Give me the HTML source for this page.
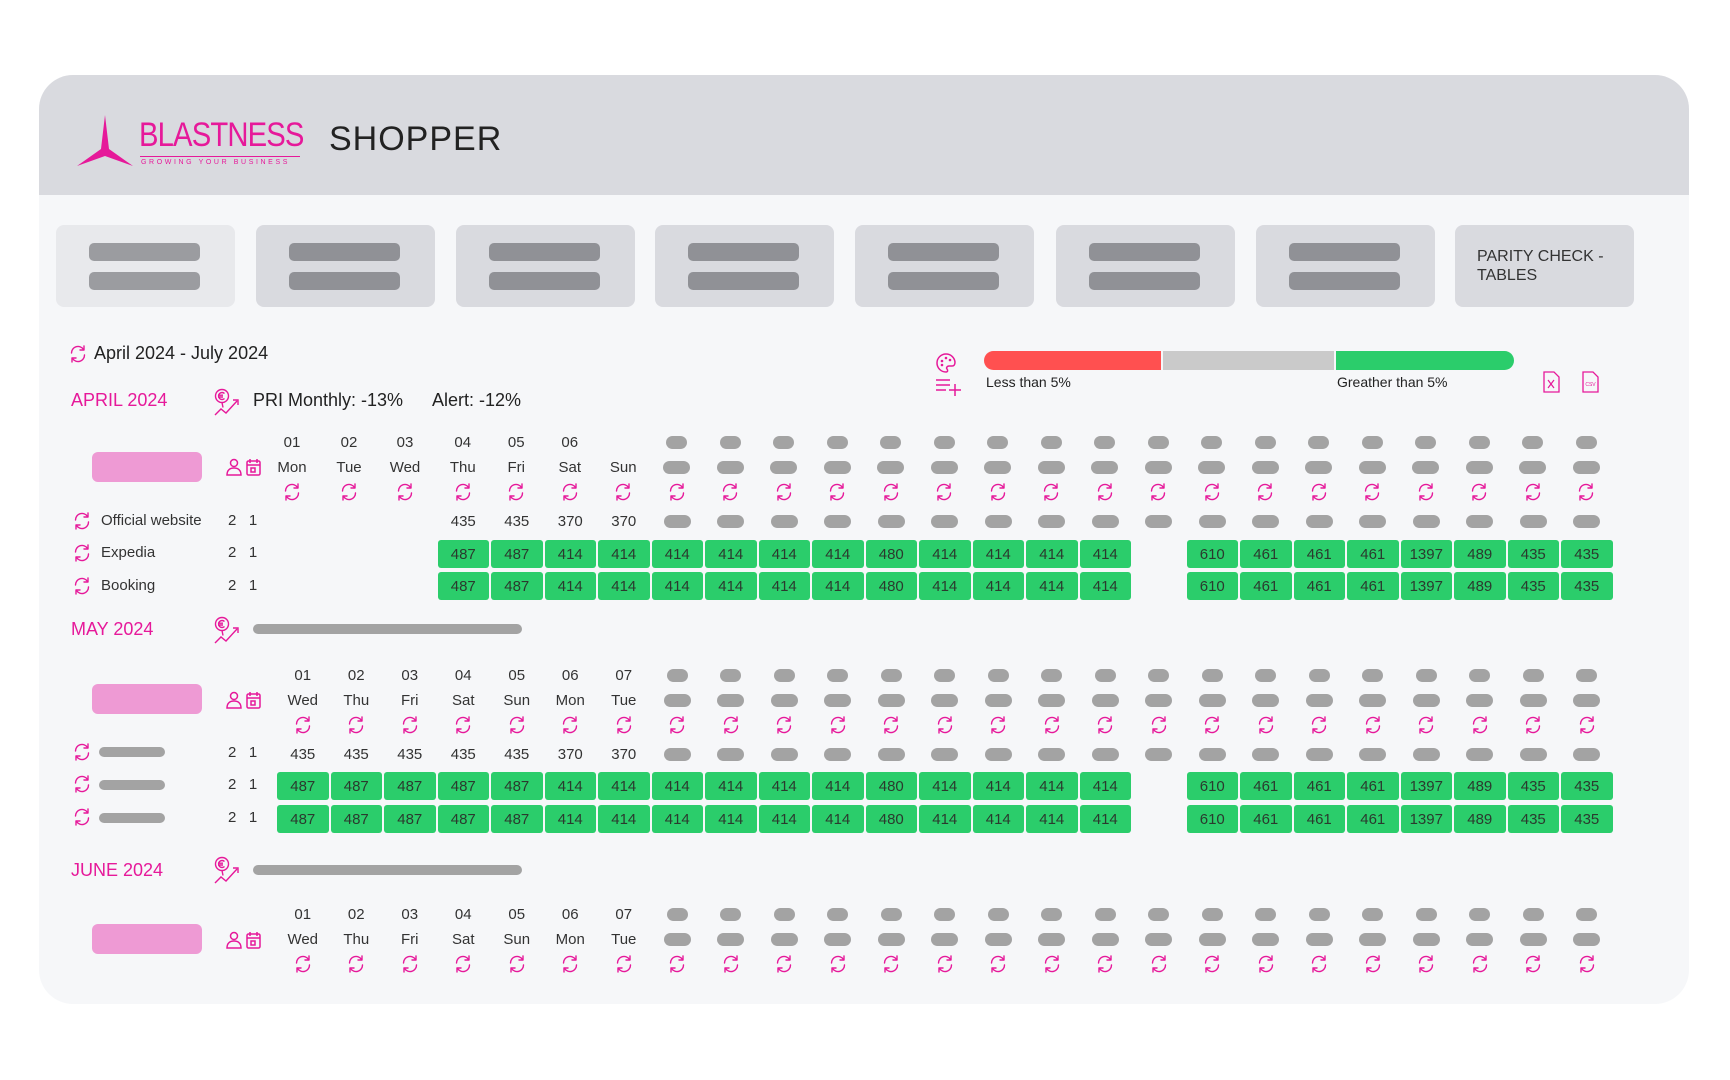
<!DOCTYPE html>
<html><head><meta charset="utf-8"><style>
*{margin:0;padding:0;box-sizing:border-box}
body{width:1730px;height:1080px;background:#fff;font-family:"Liberation Sans",sans-serif;color:#2a2a2a;position:relative;overflow:hidden}
.card{position:absolute;left:39px;top:75px;width:1650px;height:929px;background:#f6f7f9;border-radius:34px;overflow:hidden}
.hdr{position:absolute;left:0;top:0;width:100%;height:120px;background:#d9dadf}
.a{position:absolute}
.tab{position:absolute;top:150px;width:179px;height:82px;background:#d9dadf;border-radius:8px}
.tab i{position:absolute;left:33px;width:111px;height:18px;background:#909196;border-radius:5px}
.r{position:absolute;left:276px;display:flex}
.c{width:53.5px;height:28px;display:flex;align-items:center;justify-content:center;font-size:15px;color:#333;flex:none}
.g{width:51.5px;height:28px;background:#2bcd6b;border-radius:3px;display:flex;align-items:center;justify-content:center;font-size:15px;color:#2b3a2e;font-weight:normal}
.p1{width:21px;height:13px;background:#a3a3a3;border-radius:7px}
.p2{width:27px;height:13px;background:#a3a3a3;border-radius:7px}
.s{width:20px;height:20px}
.pk{color:#e6199a}
.lbl{position:absolute;font-size:15px;color:#333}
.gb{position:absolute;height:10px;background:#a3a3a3;border-radius:5px}
.pill{position:absolute;left:92px;width:110px;height:30px;background:#ee9ad4;border-radius:6px}
</style></head><body>
<svg width="0" height="0" style="position:absolute"><defs>
<symbol id="sy" viewBox="0 0 20 20"><g fill="none" stroke="#e6199a" stroke-width="1.4" stroke-linecap="round" stroke-linejoin="round"><path d="M3.5 9A6.5 6.5 0 0 1 15.5 5.5"/><path d="M16 2v4h-4"/><path d="M16.5 11A6.5 6.5 0 0 1 4.5 14.5"/><path d="M4 18v-4h4"/></g></symbol>
<symbol id="pc" viewBox="0 0 40 20"><g fill="none" stroke="#e6199a" stroke-width="1.5"><circle cx="10" cy="6" r="3.5"/><path d="M3 18c0-5 3-7 7-7s7 2 7 7z"/><rect x="23" y="4" width="13" height="14" rx="1.5"/><path d="M23 8h13M26 2v4M33 2v4"/><rect x="27" y="11" width="4" height="4"/></g></symbol>
<symbol id="eu" viewBox="0 0 30 30"><g fill="none" stroke="#e6199a" stroke-width="1.4"><circle cx="9" cy="8" r="6.5"/><path d="M11.5 5.5a3.5 3.5 0 1 0 0 5M5 7.2h5M5 9h5"/><path d="M2 27l6-6 5 4 11-12"/><path d="M20 12h5v5"/><path d="M9 14.5l1 5"/></g></symbol>
</defs></svg>
<div class="card">
<div class="hdr"></div>
<svg class="a" style="left:36px;top:40px" width="60" height="52" viewBox="0 0 60 52"><path d="M30 0L34 34L58 51L30 41L2 51L26 34Z" fill="#e6199a"/></svg>
<div class="a" style="left:100px;top:41px;font-size:34px;color:#e6199a;letter-spacing:-1px;transform:scaleX(.86);transform-origin:left">BLASTNESS</div>
<div class="a" style="left:101px;top:81px;width:160px;height:1px;background:#e6199a"></div>
<div class="a" style="left:102px;top:84px;font-size:7px;letter-spacing:2.6px;color:#e6199a">GROWING YOUR BUSINESS</div>
<div class="a" style="left:290px;top:45px;font-size:34px;color:#222;letter-spacing:1px">SHOPPER</div>

<div class="tab" style="left:17px;background:#e8e9ec"><i style="top:18px;background:#9b9ca0"></i><i style="top:47px;background:#9b9ca0"></i></div>
<div class="tab" style="left:217px"><i style="top:18px"></i><i style="top:47px"></i></div>
<div class="tab" style="left:417px"><i style="top:18px"></i><i style="top:47px"></i></div>
<div class="tab" style="left:616px"><i style="top:18px"></i><i style="top:47px"></i></div>
<div class="tab" style="left:816px"><i style="top:18px"></i><i style="top:47px"></i></div>
<div class="tab" style="left:1017px"><i style="top:18px"></i><i style="top:47px"></i></div>
<div class="tab" style="left:1217px"><i style="top:18px"></i><i style="top:47px"></i></div>
<div class="tab" style="left:1416px;padding:22px 0 0 22px;font-size:16px;line-height:19px;color:#333">PARITY CHECK -<br>TABLES</div>
</div>

<svg class="a" style="left:68px;top:344px" width="20" height="20"><use href="#sy"/></svg>
<div class="a" style="left:94px;top:343px;font-size:18px;color:#222">April 2024 - July 2024</div>

<div class="a pk" style="left:71px;top:390px;font-size:18px">APRIL 2024</div>
<svg class="a" style="left:213px;top:388px" width="30" height="30"><use href="#eu"/></svg>
<div class="a" style="left:253px;top:390px;font-size:18px;color:#222">PRI Monthly: -13%</div>
<div class="a" style="left:432px;top:390px;font-size:18px;color:#222">Alert: -12%</div>

<svg class="a" style="left:935px;top:352px" width="22" height="22" viewBox="0 0 22 22"><path d="M11 2a9 9 0 0 0 0 18c2 0 2-2 1-3s0-3 2-3h3c2 0 3-1 3-4A9 9 0 0 0 11 2z" fill="none" stroke="#e6199a" stroke-width="1.5"/><circle cx="7" cy="9" r="1.3" fill="#e6199a"/><circle cx="11" cy="6" r="1.3" fill="#e6199a"/><circle cx="15" cy="8" r="1.3" fill="#e6199a"/><circle cx="7" cy="13" r="1.3" fill="#e6199a"/></svg>
<svg class="a" style="left:935px;top:377px" width="28" height="20" viewBox="0 0 28 20"><path d="M1 3h14M1 8h14M1 13h10M20 7v12M14 13h12" stroke="#e6199a" stroke-width="1.5" fill="none"/></svg>
<div class="a" style="left:984px;top:351px;width:177px;height:19px;background:#ff5050;border-radius:10px 0 0 10px"></div>
<div class="a" style="left:1163px;top:351px;width:171px;height:19px;background:#cacaca"></div>
<div class="a" style="left:1336px;top:351px;width:178px;height:19px;background:#2bcd6b;border-radius:0 10px 10px 0"></div>
<div class="a" style="left:986px;top:374px;font-size:14px;color:#222">Less than 5%</div>
<div class="a" style="left:1337px;top:374px;font-size:14px;color:#222">Greather than 5%</div>
<svg class="a" style="left:1543px;top:371px" width="17" height="22" viewBox="0 0 17 22"><path d="M1 1h10l5 5v15H1z" fill="none" stroke="#e6199a" stroke-width="1.3"/><path d="M5 9l6 8M11 9l-6 8" stroke="#e6199a" stroke-width="1.2"/></svg>
<svg class="a" style="left:1582px;top:371px" width="17" height="22" viewBox="0 0 17 22"><path d="M1 1h10l5 5v15H1z" fill="none" stroke="#e6199a" stroke-width="1.3"/><text x="8.5" y="15" font-size="5" text-anchor="middle" fill="#e6199a" font-family="Liberation Sans">CSV</text></svg>

<!-- APRIL -->
<div class="pill" style="top:452px"></div>
<svg class="a" style="left:224px;top:457px" width="40" height="20"><use href="#pc"/></svg>
<div class="r" style="top:428px;left:263px"><div class="c" style="width:58px">01</div><div class="c" style="width:56px">02</div><div class="c" style="width:56px">03</div></div>
<div class="r" style="top:453px;left:263px"><div class="c" style="width:58px">Mon</div><div class="c" style="width:56px">Tue</div><div class="c" style="width:56px">Wed</div></div>
<div class="r" style="top:478px;left:263px"><div class="c" style="width:58px"><svg class="s"><use href="#sy"/></svg></div><div class="c" style="width:56px"><svg class="s"><use href="#sy"/></svg></div><div class="c" style="width:56px"><svg class="s"><use href="#sy"/></svg></div></div>
<div class="r" style="top:428px;left:436px"><div class="c">04</div><div class="c">05</div><div class="c">06</div><div class="c"></div><div class="c"><i class="p1"></i></div><div class="c"><i class="p1"></i></div><div class="c"><i class="p1"></i></div><div class="c"><i class="p1"></i></div><div class="c"><i class="p1"></i></div><div class="c"><i class="p1"></i></div><div class="c"><i class="p1"></i></div><div class="c"><i class="p1"></i></div><div class="c"><i class="p1"></i></div><div class="c"><i class="p1"></i></div><div class="c"><i class="p1"></i></div><div class="c"><i class="p1"></i></div><div class="c"><i class="p1"></i></div><div class="c"><i class="p1"></i></div><div class="c"><i class="p1"></i></div><div class="c"><i class="p1"></i></div><div class="c"><i class="p1"></i></div><div class="c"><i class="p1"></i></div></div>
<div class="r" style="top:453px;left:436px"><div class="c">Thu</div><div class="c">Fri</div><div class="c">Sat</div><div class="c">Sun</div><div class="c"><i class="p2"></i></div><div class="c"><i class="p2"></i></div><div class="c"><i class="p2"></i></div><div class="c"><i class="p2"></i></div><div class="c"><i class="p2"></i></div><div class="c"><i class="p2"></i></div><div class="c"><i class="p2"></i></div><div class="c"><i class="p2"></i></div><div class="c"><i class="p2"></i></div><div class="c"><i class="p2"></i></div><div class="c"><i class="p2"></i></div><div class="c"><i class="p2"></i></div><div class="c"><i class="p2"></i></div><div class="c"><i class="p2"></i></div><div class="c"><i class="p2"></i></div><div class="c"><i class="p2"></i></div><div class="c"><i class="p2"></i></div><div class="c"><i class="p2"></i></div></div>
<div class="r" style="top:478px;left:436px"><div class="c"><svg class="s"><use href="#sy"/></svg></div><div class="c"><svg class="s"><use href="#sy"/></svg></div><div class="c"><svg class="s"><use href="#sy"/></svg></div><div class="c"><svg class="s"><use href="#sy"/></svg></div><div class="c"><svg class="s"><use href="#sy"/></svg></div><div class="c"><svg class="s"><use href="#sy"/></svg></div><div class="c"><svg class="s"><use href="#sy"/></svg></div><div class="c"><svg class="s"><use href="#sy"/></svg></div><div class="c"><svg class="s"><use href="#sy"/></svg></div><div class="c"><svg class="s"><use href="#sy"/></svg></div><div class="c"><svg class="s"><use href="#sy"/></svg></div><div class="c"><svg class="s"><use href="#sy"/></svg></div><div class="c"><svg class="s"><use href="#sy"/></svg></div><div class="c"><svg class="s"><use href="#sy"/></svg></div><div class="c"><svg class="s"><use href="#sy"/></svg></div><div class="c"><svg class="s"><use href="#sy"/></svg></div><div class="c"><svg class="s"><use href="#sy"/></svg></div><div class="c"><svg class="s"><use href="#sy"/></svg></div><div class="c"><svg class="s"><use href="#sy"/></svg></div><div class="c"><svg class="s"><use href="#sy"/></svg></div><div class="c"><svg class="s"><use href="#sy"/></svg></div><div class="c"><svg class="s"><use href="#sy"/></svg></div></div>

<svg class="a" style="left:72px;top:511px" width="20" height="20"><use href="#sy"/></svg><div class="lbl" style="left:101px;top:512px">Official website</div><div class="lbl" style="left:228px;top:512px">2&nbsp;&nbsp;&nbsp;1</div>
<svg class="a" style="left:72px;top:543px" width="20" height="20"><use href="#sy"/></svg><div class="lbl" style="left:101px;top:544px">Expedia</div><div class="lbl" style="left:228px;top:544px">2&nbsp;&nbsp;&nbsp;1</div>
<svg class="a" style="left:72px;top:576px" width="20" height="20"><use href="#sy"/></svg><div class="lbl" style="left:101px;top:577px">Booking</div><div class="lbl" style="left:228px;top:577px">2&nbsp;&nbsp;&nbsp;1</div>

<div class="r" style="top:507px"><div class="c"></div><div class="c"></div><div class="c"></div><div class="c">435</div><div class="c">435</div><div class="c">370</div><div class="c">370</div><div class="c"><i class="p2"></i></div><div class="c"><i class="p2"></i></div><div class="c"><i class="p2"></i></div><div class="c"><i class="p2"></i></div><div class="c"><i class="p2"></i></div><div class="c"><i class="p2"></i></div><div class="c"><i class="p2"></i></div><div class="c"><i class="p2"></i></div><div class="c"><i class="p2"></i></div><div class="c"><i class="p2"></i></div><div class="c"><i class="p2"></i></div><div class="c"><i class="p2"></i></div><div class="c"><i class="p2"></i></div><div class="c"><i class="p2"></i></div><div class="c"><i class="p2"></i></div><div class="c"><i class="p2"></i></div><div class="c"><i class="p2"></i></div><div class="c"><i class="p2"></i></div></div>
<div class="r" style="top:540px"><div class="c"></div><div class="c"></div><div class="c"></div><div class="c"><span class="g">487</span></div><div class="c"><span class="g">487</span></div><div class="c"><span class="g">414</span></div><div class="c"><span class="g">414</span></div><div class="c"><span class="g">414</span></div><div class="c"><span class="g">414</span></div><div class="c"><span class="g">414</span></div><div class="c"><span class="g">414</span></div><div class="c"><span class="g">480</span></div><div class="c"><span class="g">414</span></div><div class="c"><span class="g">414</span></div><div class="c"><span class="g">414</span></div><div class="c"><span class="g">414</span></div><div class="c"></div><div class="c"><span class="g">610</span></div><div class="c"><span class="g">461</span></div><div class="c"><span class="g">461</span></div><div class="c"><span class="g">461</span></div><div class="c"><span class="g">1397</span></div><div class="c"><span class="g">489</span></div><div class="c"><span class="g">435</span></div><div class="c"><span class="g">435</span></div></div>
<div class="r" style="top:572px"><div class="c"></div><div class="c"></div><div class="c"></div><div class="c"><span class="g">487</span></div><div class="c"><span class="g">487</span></div><div class="c"><span class="g">414</span></div><div class="c"><span class="g">414</span></div><div class="c"><span class="g">414</span></div><div class="c"><span class="g">414</span></div><div class="c"><span class="g">414</span></div><div class="c"><span class="g">414</span></div><div class="c"><span class="g">480</span></div><div class="c"><span class="g">414</span></div><div class="c"><span class="g">414</span></div><div class="c"><span class="g">414</span></div><div class="c"><span class="g">414</span></div><div class="c"></div><div class="c"><span class="g">610</span></div><div class="c"><span class="g">461</span></div><div class="c"><span class="g">461</span></div><div class="c"><span class="g">461</span></div><div class="c"><span class="g">1397</span></div><div class="c"><span class="g">489</span></div><div class="c"><span class="g">435</span></div><div class="c"><span class="g">435</span></div></div>

<!-- MAY -->
<div class="a pk" style="left:71px;top:619px;font-size:18px">MAY 2024</div>
<svg class="a" style="left:213px;top:616px" width="30" height="30"><use href="#eu"/></svg>
<div class="gb" style="left:253px;top:624px;width:269px"></div>
<div class="pill" style="top:684px"></div>
<svg class="a" style="left:224px;top:690px" width="40" height="20"><use href="#pc"/></svg>
<div class="r" style="top:661px"><div class="c">01</div><div class="c">02</div><div class="c">03</div><div class="c">04</div><div class="c">05</div><div class="c">06</div><div class="c">07</div><div class="c"><i class="p1"></i></div><div class="c"><i class="p1"></i></div><div class="c"><i class="p1"></i></div><div class="c"><i class="p1"></i></div><div class="c"><i class="p1"></i></div><div class="c"><i class="p1"></i></div><div class="c"><i class="p1"></i></div><div class="c"><i class="p1"></i></div><div class="c"><i class="p1"></i></div><div class="c"><i class="p1"></i></div><div class="c"><i class="p1"></i></div><div class="c"><i class="p1"></i></div><div class="c"><i class="p1"></i></div><div class="c"><i class="p1"></i></div><div class="c"><i class="p1"></i></div><div class="c"><i class="p1"></i></div><div class="c"><i class="p1"></i></div><div class="c"><i class="p1"></i></div></div>
<div class="r" style="top:686px"><div class="c">Wed</div><div class="c">Thu</div><div class="c">Fri</div><div class="c">Sat</div><div class="c">Sun</div><div class="c">Mon</div><div class="c">Tue</div><div class="c"><i class="p2"></i></div><div class="c"><i class="p2"></i></div><div class="c"><i class="p2"></i></div><div class="c"><i class="p2"></i></div><div class="c"><i class="p2"></i></div><div class="c"><i class="p2"></i></div><div class="c"><i class="p2"></i></div><div class="c"><i class="p2"></i></div><div class="c"><i class="p2"></i></div><div class="c"><i class="p2"></i></div><div class="c"><i class="p2"></i></div><div class="c"><i class="p2"></i></div><div class="c"><i class="p2"></i></div><div class="c"><i class="p2"></i></div><div class="c"><i class="p2"></i></div><div class="c"><i class="p2"></i></div><div class="c"><i class="p2"></i></div><div class="c"><i class="p2"></i></div></div>
<div class="r" style="top:711px"><div class="c"><svg class="s"><use href="#sy"/></svg></div><div class="c"><svg class="s"><use href="#sy"/></svg></div><div class="c"><svg class="s"><use href="#sy"/></svg></div><div class="c"><svg class="s"><use href="#sy"/></svg></div><div class="c"><svg class="s"><use href="#sy"/></svg></div><div class="c"><svg class="s"><use href="#sy"/></svg></div><div class="c"><svg class="s"><use href="#sy"/></svg></div><div class="c"><svg class="s"><use href="#sy"/></svg></div><div class="c"><svg class="s"><use href="#sy"/></svg></div><div class="c"><svg class="s"><use href="#sy"/></svg></div><div class="c"><svg class="s"><use href="#sy"/></svg></div><div class="c"><svg class="s"><use href="#sy"/></svg></div><div class="c"><svg class="s"><use href="#sy"/></svg></div><div class="c"><svg class="s"><use href="#sy"/></svg></div><div class="c"><svg class="s"><use href="#sy"/></svg></div><div class="c"><svg class="s"><use href="#sy"/></svg></div><div class="c"><svg class="s"><use href="#sy"/></svg></div><div class="c"><svg class="s"><use href="#sy"/></svg></div><div class="c"><svg class="s"><use href="#sy"/></svg></div><div class="c"><svg class="s"><use href="#sy"/></svg></div><div class="c"><svg class="s"><use href="#sy"/></svg></div><div class="c"><svg class="s"><use href="#sy"/></svg></div><div class="c"><svg class="s"><use href="#sy"/></svg></div><div class="c"><svg class="s"><use href="#sy"/></svg></div><div class="c"><svg class="s"><use href="#sy"/></svg></div></div>

<svg class="a" style="left:72px;top:742px" width="20" height="20"><use href="#sy"/></svg><div class="gb" style="left:99px;top:747px;width:66px"></div><div class="lbl" style="left:228px;top:744px">2&nbsp;&nbsp;&nbsp;1</div>
<svg class="a" style="left:72px;top:774px" width="20" height="20"><use href="#sy"/></svg><div class="gb" style="left:99px;top:780px;width:66px"></div><div class="lbl" style="left:228px;top:776px">2&nbsp;&nbsp;&nbsp;1</div>
<svg class="a" style="left:72px;top:807px" width="20" height="20"><use href="#sy"/></svg><div class="gb" style="left:99px;top:813px;width:66px"></div><div class="lbl" style="left:228px;top:809px">2&nbsp;&nbsp;&nbsp;1</div>

<div class="r" style="top:740px"><div class="c">435</div><div class="c">435</div><div class="c">435</div><div class="c">435</div><div class="c">435</div><div class="c">370</div><div class="c">370</div><div class="c"><i class="p2"></i></div><div class="c"><i class="p2"></i></div><div class="c"><i class="p2"></i></div><div class="c"><i class="p2"></i></div><div class="c"><i class="p2"></i></div><div class="c"><i class="p2"></i></div><div class="c"><i class="p2"></i></div><div class="c"><i class="p2"></i></div><div class="c"><i class="p2"></i></div><div class="c"><i class="p2"></i></div><div class="c"><i class="p2"></i></div><div class="c"><i class="p2"></i></div><div class="c"><i class="p2"></i></div><div class="c"><i class="p2"></i></div><div class="c"><i class="p2"></i></div><div class="c"><i class="p2"></i></div><div class="c"><i class="p2"></i></div><div class="c"><i class="p2"></i></div></div>
<div class="r" style="top:772px"><div class="c"><span class="g">487</span></div><div class="c"><span class="g">487</span></div><div class="c"><span class="g">487</span></div><div class="c"><span class="g">487</span></div><div class="c"><span class="g">487</span></div><div class="c"><span class="g">414</span></div><div class="c"><span class="g">414</span></div><div class="c"><span class="g">414</span></div><div class="c"><span class="g">414</span></div><div class="c"><span class="g">414</span></div><div class="c"><span class="g">414</span></div><div class="c"><span class="g">480</span></div><div class="c"><span class="g">414</span></div><div class="c"><span class="g">414</span></div><div class="c"><span class="g">414</span></div><div class="c"><span class="g">414</span></div><div class="c"></div><div class="c"><span class="g">610</span></div><div class="c"><span class="g">461</span></div><div class="c"><span class="g">461</span></div><div class="c"><span class="g">461</span></div><div class="c"><span class="g">1397</span></div><div class="c"><span class="g">489</span></div><div class="c"><span class="g">435</span></div><div class="c"><span class="g">435</span></div></div>
<div class="r" style="top:805px"><div class="c"><span class="g">487</span></div><div class="c"><span class="g">487</span></div><div class="c"><span class="g">487</span></div><div class="c"><span class="g">487</span></div><div class="c"><span class="g">487</span></div><div class="c"><span class="g">414</span></div><div class="c"><span class="g">414</span></div><div class="c"><span class="g">414</span></div><div class="c"><span class="g">414</span></div><div class="c"><span class="g">414</span></div><div class="c"><span class="g">414</span></div><div class="c"><span class="g">480</span></div><div class="c"><span class="g">414</span></div><div class="c"><span class="g">414</span></div><div class="c"><span class="g">414</span></div><div class="c"><span class="g">414</span></div><div class="c"></div><div class="c"><span class="g">610</span></div><div class="c"><span class="g">461</span></div><div class="c"><span class="g">461</span></div><div class="c"><span class="g">461</span></div><div class="c"><span class="g">1397</span></div><div class="c"><span class="g">489</span></div><div class="c"><span class="g">435</span></div><div class="c"><span class="g">435</span></div></div>

<!-- JUNE -->
<div class="a pk" style="left:71px;top:860px;font-size:18px">JUNE 2024</div>
<svg class="a" style="left:213px;top:856px" width="30" height="30"><use href="#eu"/></svg>
<div class="gb" style="left:253px;top:865px;width:269px"></div>
<div class="pill" style="top:924px"></div>
<svg class="a" style="left:224px;top:930px" width="40" height="20"><use href="#pc"/></svg>
<div class="r" style="top:900px"><div class="c">01</div><div class="c">02</div><div class="c">03</div><div class="c">04</div><div class="c">05</div><div class="c">06</div><div class="c">07</div><div class="c"><i class="p1"></i></div><div class="c"><i class="p1"></i></div><div class="c"><i class="p1"></i></div><div class="c"><i class="p1"></i></div><div class="c"><i class="p1"></i></div><div class="c"><i class="p1"></i></div><div class="c"><i class="p1"></i></div><div class="c"><i class="p1"></i></div><div class="c"><i class="p1"></i></div><div class="c"><i class="p1"></i></div><div class="c"><i class="p1"></i></div><div class="c"><i class="p1"></i></div><div class="c"><i class="p1"></i></div><div class="c"><i class="p1"></i></div><div class="c"><i class="p1"></i></div><div class="c"><i class="p1"></i></div><div class="c"><i class="p1"></i></div><div class="c"><i class="p1"></i></div></div>
<div class="r" style="top:925px"><div class="c">Wed</div><div class="c">Thu</div><div class="c">Fri</div><div class="c">Sat</div><div class="c">Sun</div><div class="c">Mon</div><div class="c">Tue</div><div class="c"><i class="p2"></i></div><div class="c"><i class="p2"></i></div><div class="c"><i class="p2"></i></div><div class="c"><i class="p2"></i></div><div class="c"><i class="p2"></i></div><div class="c"><i class="p2"></i></div><div class="c"><i class="p2"></i></div><div class="c"><i class="p2"></i></div><div class="c"><i class="p2"></i></div><div class="c"><i class="p2"></i></div><div class="c"><i class="p2"></i></div><div class="c"><i class="p2"></i></div><div class="c"><i class="p2"></i></div><div class="c"><i class="p2"></i></div><div class="c"><i class="p2"></i></div><div class="c"><i class="p2"></i></div><div class="c"><i class="p2"></i></div><div class="c"><i class="p2"></i></div></div>
<div class="r" style="top:950px"><div class="c"><svg class="s"><use href="#sy"/></svg></div><div class="c"><svg class="s"><use href="#sy"/></svg></div><div class="c"><svg class="s"><use href="#sy"/></svg></div><div class="c"><svg class="s"><use href="#sy"/></svg></div><div class="c"><svg class="s"><use href="#sy"/></svg></div><div class="c"><svg class="s"><use href="#sy"/></svg></div><div class="c"><svg class="s"><use href="#sy"/></svg></div><div class="c"><svg class="s"><use href="#sy"/></svg></div><div class="c"><svg class="s"><use href="#sy"/></svg></div><div class="c"><svg class="s"><use href="#sy"/></svg></div><div class="c"><svg class="s"><use href="#sy"/></svg></div><div class="c"><svg class="s"><use href="#sy"/></svg></div><div class="c"><svg class="s"><use href="#sy"/></svg></div><div class="c"><svg class="s"><use href="#sy"/></svg></div><div class="c"><svg class="s"><use href="#sy"/></svg></div><div class="c"><svg class="s"><use href="#sy"/></svg></div><div class="c"><svg class="s"><use href="#sy"/></svg></div><div class="c"><svg class="s"><use href="#sy"/></svg></div><div class="c"><svg class="s"><use href="#sy"/></svg></div><div class="c"><svg class="s"><use href="#sy"/></svg></div><div class="c"><svg class="s"><use href="#sy"/></svg></div><div class="c"><svg class="s"><use href="#sy"/></svg></div><div class="c"><svg class="s"><use href="#sy"/></svg></div><div class="c"><svg class="s"><use href="#sy"/></svg></div><div class="c"><svg class="s"><use href="#sy"/></svg></div></div>
</body></html>
